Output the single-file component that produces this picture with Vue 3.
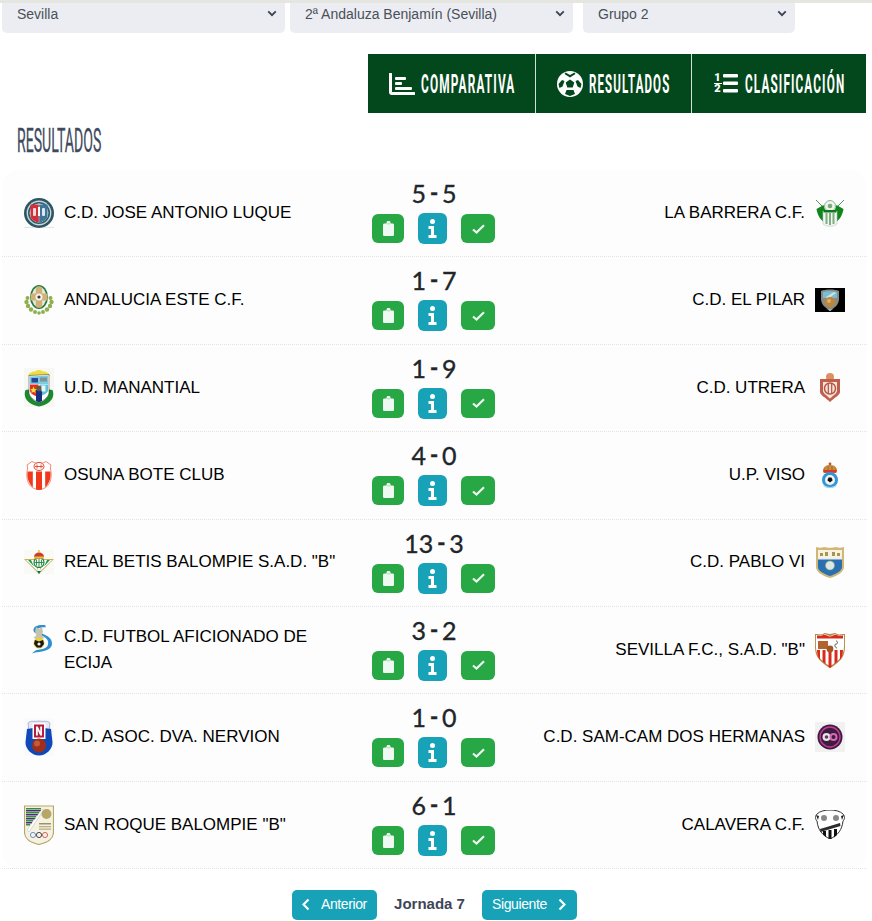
<script setup>
const selects = [
  { label: 'Sevilla', cls: 'w1' },
  { label: '2ª Andaluza Benjamín (Sevilla)', cls: 'w1' },
  { label: 'Grupo 2', cls: 'w2' },
]

const logos = {
  luque: { h: 30, svg: `<rect y="29.300" width="30" height=".7" fill="#d9dcdc"/><circle cx="15" cy="15" r="15" fill="#2c5664"/><circle cx="15" cy="15" r="12.400" fill="#c9d6da"/><circle cx="15" cy="15" r="11" fill="#2f5b69"/><circle cx="15" cy="15" r="9.400" fill="#eef3f4"/><path d="M6.500 6.500h8.300v18c-4-.5-8.300-3-8.300-7z" fill="#d22f38"/><path d="M15.200 6.500h8.300v11c0 4-4.300 6.500-8.300 7z" fill="#3f7598"/><rect x="9" y="10" width="3" height="8" rx="1" fill="#f5d9da"/><rect x="18" y="10" width="3" height="8" rx="1" fill="#dce8ef"/><rect x="14" y="9" width="2" height="9" fill="#fff"/>` },
  andalucia: { h: 30, svg: `<g fill="#8eb04e"><circle cx="3.500" cy="13" r="2"/><circle cx="26.500" cy="13" r="2"/><circle cx="2.500" cy="17" r="2.200"/><circle cx="27.500" cy="17" r="2.200"/><circle cx="4" cy="21" r="2.200"/><circle cx="26" cy="21" r="2.200"/><circle cx="7" cy="24.500" r="2.200"/><circle cx="23" cy="24.500" r="2.200"/><circle cx="11" cy="27" r="2"/><circle cx="19" cy="27" r="2"/><circle cx="15" cy="28" r="1.800"/></g><ellipse cx="15" cy="12" rx="9" ry="12" fill="#1f7a3d"/><ellipse cx="15" cy="12" rx="7.200" ry="10.500" fill="#e7eadb"/><rect x="11.800" y="1.500" width="6.400" height="21" rx="1.500" fill="#d2b07a"/><rect x="6.500" y="8.500" width="17" height="7" rx="1.500" fill="#d2b07a"/><circle cx="15" cy="12" r="3.500" fill="#f5f3ea"/><circle cx="15" cy="12" r="1.600" fill="#3b3b3b"/>` },
  manantial: { h: 39, svg: `<rect width="30" height="39" fill="#f7f7f4"/><path d="M4 8c1-4 4-3 5-5 1 2 3-1 6-1s5 3 6 1c1 2 4 1 5 5z" fill="#f0dc3c"/><g fill="#1b8a2c"><path d="M1.500 22c-3 8 3 15 13.500 16.500 10.500-1.500 16.500-8.500 13.500-16.500l-3.500-.5c.5 7-4 11.500-10 13-6-1.500-10.500-6-10-13z"/></g><path d="M5 7.500l20-1v18c0 4-5 8-10 10-5-2-10-6-10-10z" fill="#fff" stroke="#333" stroke-width=".5"/><path d="M6 8.500l18-1v8.500H6z" fill="#79cde0"/><path d="M6 16.500h8.500v12.500c-5-2-8.500-3-8.500-7z" fill="#e33022"/><path d="M15.500 16.500H24v6c0 2-3 4-8.500 6z" fill="#58c2dc"/><path d="M12 22h6v11l-3 1.500-3-1.500z" fill="#14307f"/><circle cx="15" cy="20.500" r="2.800" fill="#6c5a3c"/><path d="M9.500 18.500l1 2.500 2.400.2-1.800 1.500.6 2.400-2.200-1.300-2.200 1.300.6-2.400-1.800-1.500 2.400-.2z" fill="#f5e23a"/><rect x="17.500" y="17.500" width="4" height="6" fill="#e8f4f7"/><rect x="7.500" y="10" width="6.500" height="4.500" fill="#2a4595"/><rect x="16" y="9.500" width="7" height="4" fill="#8a8f96"/>` },
  osuna: { h: 30, svg: `<path d="M3 5l5-3.500 3 1.500h8l3-1.500L27 5c-.5 1.500-.8 2.500-.5 4 1.500 7 .5 13-3 17-2.500 2.500-6 3.500-8.500 3.500S9 28.500 6.500 26c-3.500-4-4.500-10-3-17C3.800 7.500 3.500 6.500 3 5z" fill="#fff" stroke="#ec6f55" stroke-width=".8"/><path d="M3.600 11.500H8.800v15.800C4.500 23 2.800 18 3.600 11.500z" fill="#f0381a"/><path d="M12 11.500h6v18c-2 .5-4 .5-6 0z" fill="#f0381a"/><path d="M21.200 11.500h5.200c.8 6.500-.9 11.500-5.200 15.800z" fill="#f0381a"/><ellipse cx="15" cy="6.500" rx="5" ry="4" fill="#fff" stroke="#e2492d" stroke-width="1"/><path d="M11 6.500h8M13 4.500v4M17 4.500v4" stroke="#e2492d" stroke-width=".9"/>` },
  betis: { h: 24, svg: `<rect width="30" height="24" fill="#f9f9f6"/><path d="M0 9h30L15 24z" fill="#c9b05a"/><path d="M2 10h26L15 22.500z" fill="#fff"/><path d="M4 10h3l3 6.500zM12 10h2v11zM16 10h2l-2 11zM23 10h3l-6 6.500z" fill="#1a9a45"/><circle cx="15" cy="12.500" r="5" fill="#f2f6ee" stroke="#0f7c36" stroke-width="1.100"/><path d="M15 8v9M10.500 12.500h9M12.500 9.500v6M17.500 9.500v6" stroke="#0f7c36" stroke-width=".8"/><path d="M10 7c0-6 10-6 10 0l-.5 1.500h-9z" fill="#d43a2a"/><path d="M10 6.500h10v2h-10z" fill="#e5c13c"/><circle cx="15" cy="1" r="1" fill="#e5c13c"/><path d="M13 21h4l-2 3z" fill="#0f7c36"/>` },
  ecija: { h: 30, svg: `<path d="M21.500 1.200C15 .5 9 2 9.500 6.500c.3 3 4 3.500 8 5 5 2 7.500 5 6.500 9-1 5-8 4.500-11 5.500-2 .6-4 2-5 3.500 3-1.500 6-1 10-2 5-1 10-3 10-8 0-5-4-7.500-9-9.500-3-1.300-5.500-2-5.500-4s5-3 8-2.500z" fill="#2d8fd2"/><path d="M12 3l3 2 3-2 1 5-1.500 3 3 3-3 1h-5l-3-1 3-3L11 8z" fill="#c6c2ad"/><circle cx="15" cy="19" r="5.500" fill="#ecd037"/><path d="M11 16l4 1.500 4-1.500 1 4-3 3.500h-4L10 20z" fill="#171717"/><circle cx="15" cy="20" r="1.600" fill="#f2f2f2"/>` },
  nervion: { h: 38, svg: `<rect width="30" height="38" fill="#fafafa"/><path d="M4 5c3-3 6-1 11-2 5 1 8-1 11 2l-1 8H5z" fill="#e6e9f3" stroke="#9aa7cf" stroke-width=".8"/><path d="M3 11c4-1.500 20-1.500 24 0l1.500 13c.5 7-6.500 13.500-13.500 13.500S1 31 1.500 24z" fill="#0f49b8"/><path d="M8.500 5h13v16h-13z" fill="#fff"/><path d="M10 6.500h10v13H10z" fill="#b31f3d"/><path d="M12 17.500v-9h1.800l2.400 5v-5H18v9h-1.800l-2.400-5v5z" fill="#fff"/><circle cx="15" cy="27.500" r="7" fill="#9e2f1a"/><circle cx="13" cy="25.500" r="3" fill="#c25a3c"/>` },
  roque: { h: 40, svg: `<path d="M.500 1h29v26c0 7-7 11-14.500 12.500C7.500 38 .500 34 .500 27z" fill="#f5f2e4" stroke="#b7a766" stroke-width="1.200"/><path d="M2 3h15v1.500H2zM2 7h13v1.500H2zM2 11h10v1.500H2zM2 15h7v1.500H2zM2 19h4v1.500H2z" fill="#3b8a3f"/><path d="M2 5h15v1.400H2zM2 9h13v1.400H2zM2 13h10v1.400H2zM2 17h6v1.400H2z" fill="#43307f"/><path d="M3 25L18 4l1.500 1L5 27z" fill="#fff" stroke="#a5a8a0" stroke-width=".4"/><circle cx="22.500" cy="9" r="5" fill="#b7a766"/><rect x="15" y="18" width="12" height="1.500" fill="#9d9464"/><rect x="15" y="21" width="12" height="1.300" fill="#b8b186"/><rect x="15" y="23.500" width="12" height="1.300" fill="#b8b186"/><g fill="none" stroke-width=".8"><circle cx="9" cy="30" r="2.600" stroke="#4a79c5"/><circle cx="15" cy="30" r="2.600" stroke="#222"/><circle cx="21" cy="30" r="2.600" stroke="#d04545"/></g>` },
  barrera: { h: 28, svg: `<path d="M1 1l8 8M29 1l-8 8" stroke="#5f8d63" stroke-width="1"/><path d="M1.500 10l7-4 2 6-1 4 1 8c-4-2-8-7-9-14zM28.500 10l-7-4-2 6 1 4-1 8c4-2 8-7 9-14z" fill="#0f851c"/><circle cx="15" cy="7" r="5.500" fill="#eef3ec" stroke="#8db78e" stroke-width="1"/><circle cx="15" cy="7" r="2.300" fill="#7aa97e"/><path d="M8 12h14v13c-3 3-11 3-14 0z" fill="#f3f6f1" stroke="#bccabc" stroke-width=".6"/><path d="M10.500 14h2v11h-2zM14 14h2v12h-2zM17.500 14h2v11h-2z" fill="#7fae83"/><path d="M8.500 11h13v2.500h-13z" fill="#0c7a18"/>` },
  pilar: { h: 24, svg: `<rect width="30" height="24" fill="#000"/><path d="M6 3c4-2 14-2 18 0v8c0 5-4 9-9 11.500C10 20 6 16 6 11z" fill="#8b8b86"/><path d="M8 4c3-1 11-1 14 0v6H8z" fill="#78bdd2"/><path d="M11 9l8-5 2 1-8 6z" fill="#cbe3ea"/><circle cx="15" cy="14" r="5" fill="#bf8636"/><circle cx="14" cy="13" r="2" fill="#dcae68"/><path d="M10 20c3 2 7 2 10 0l-5 3z" fill="#d4d0c4"/>` },
  utrera: { h: 29, svg: `<circle cx="15" cy="4" r="4" fill="#dc8f62"/><path d="M5 6h20v13c0 3-6 6-10 10-4-4-10-7-10-10z" fill="#c0604c"/><path d="M8 9h14v9c0 2-3.500 4.500-7 7.500-3.500-3-7-5.500-7-7.500z" fill="#f3e4dc"/><circle cx="15" cy="15.500" r="5.500" fill="none" stroke="#b8503f" stroke-width="1.400"/><path d="M13.300 10.500v10M16.700 10.500v10" stroke="#b8503f" stroke-width="1.200"/>` },
  viso: { h: 26, svg: `<path d="M8 9c0-3 2-6 7-6s7 3 7 6l-1 2H9z" fill="#b8792d"/><path d="M11 4v5M15 3v6M19 4v5" stroke="#d6a354" stroke-width="1"/><circle cx="15" cy="2" r="1.400" fill="#c4513a"/><path d="M8.500 8h13v2.500h-13z" fill="#d93a2c"/><circle cx="15" cy="18" r="8" fill="#3296d6"/><circle cx="15" cy="18" r="5" fill="#f5f5f5"/><path d="M13.500 15.500h3l1.200 2.700-2.700 2.300-2.700-2.300z" fill="#111"/><path d="M8 22c3 4 11 4 14 0l-1 3c-3 1-9 1-12 0z" fill="#bcdcf0"/>` },
  pablo: { h: 31, svg: `<path d="M1 0c3 1 6 1 8 0 3 1 9 1 12 0 2 1 5 1 8 0v20c0 5-7 9-14 11C8 29 1 25 1 20z" fill="#cfb778"/><path d="M3 3h24v8H3z" fill="#f7f1de"/><path d="M3 11h24v9c0 4-6 7-12 9-6-2-12-5-12-9z" fill="#2a6fb0"/><circle cx="15" cy="18.500" r="4.500" fill="#dfe8e0" stroke="#8aa890" stroke-width=".6"/><path d="M5 6h3v3H5zM10 5h3v4h-3zM17 5h3v4h-3zM22 6h3v3h-3z" fill="#a79457"/><path d="M3 11h24v1.500H3z" fill="#e8edf2"/>` },
  sevilla: { h: 36, svg: `<path d="M0 2c4 0 6 1 8 0 2-2 4 0 7 0s5-2 7 0c2 1 4 0 8 0 0 10 1 18-3 24-3 4-8 8-12 10-4-2-9-6-12-10C-1 20 0 12 0 2z" fill="#b88a48"/><path d="M1 3c4 .5 5 1 7 0 2-2 5 1 7 1s5-3 7-1c2 1 3 .5 7 0 0 9 1 16-3 22-3 4-7 7-11 9-4-2-8-5-11-9C0 19 1 12 1 3z" fill="#fff"/><path d="M2 3.500c3 .5 4.500.5 6-.5 2-1 5 1.500 7 1.500s5-2.500 7-1.500c1.500 1 3 1 6 .5v3H2z" fill="#d92a1c"/><path d="M2 18h3v10c-2-3-3-6-3-10zM7.500 18h3v14l-3-2.500zM13.500 18h3v17l-1.500 1-1.500-1zM19.500 18h3v11.500l-3 2.500zM25 18h3c0 4-1 7-3 10z" fill="#d92a1c"/><path d="M3 9h10v8H3z" fill="#b2632e"/><circle cx="15" cy="17" r="3.400" fill="#a55626"/><path d="M21 9c2 0 2 3 0 3s-1 4 1 4" fill="none" stroke="#555" stroke-width="1"/>` },
  samcam: { h: 30, svg: `<rect width="30" height="30" fill="#f1f1f1"/><circle cx="15" cy="15" r="12.500" fill="#3d1c3d"/><circle cx="15" cy="15" r="10" fill="none" stroke="#c63a9a" stroke-width="1.400"/><circle cx="11.500" cy="15" r="4" fill="#e8e4ea"/><circle cx="18.500" cy="15" r="4" fill="#d86ab5"/><circle cx="18.500" cy="15" r="2" fill="#3d1c3d"/><circle cx="11.500" cy="15" r="1.800" fill="#5a3f5a"/>` },
  calavera: { h: 29, svg: `<path d="M2 4c3-3 8-4 13-4s10 1 13 4c2 2 2 5 0 7-1 9-5 14-13 18C7 25 3 20 2 11 0 9 0 6 2 4z" fill="#fff" stroke="#333" stroke-width="1"/><circle cx="9" cy="8" r="3" fill="#888"/><circle cx="21" cy="8" r="3" fill="#888"/><path d="M1 5l3 1-1 4zM29 5l-3 1 1 4z" fill="#222"/><path d="M5 19l20-6 .500 3-20 6z" fill="#2d2d2d"/><path d="M8 21h3v6l-3-2.500zM13.500 20h3v9l-1.500 0-1.500-.5zM19 19h3v6l-3 2.500z" fill="#111"/>` },
}

const rows = [
  { home: 'C.D. JOSE ANTONIO LUQUE', hl: 'luque', h: '5', a: '5', away: 'LA BARRERA C.F.', al: 'barrera' },
  { home: 'ANDALUCIA ESTE C.F.', hl: 'andalucia', h: '1', a: '7', away: 'C.D. EL PILAR', al: 'pilar' },
  { home: 'U.D. MANANTIAL', hl: 'manantial', h: '1', a: '9', away: 'C.D. UTRERA', al: 'utrera' },
  { home: 'OSUNA BOTE CLUB', hl: 'osuna', h: '4', a: '0', away: 'U.P. VISO', al: 'viso' },
  { home: 'REAL BETIS BALOMPIE S.A.D. "B"', hl: 'betis', h: '13', a: '3', away: 'C.D. PABLO VI', al: 'pablo' },
  { home: 'C.D. FUTBOL AFICIONADO DE ECIJA', hl: 'ecija', h: '3', a: '2', away: 'SEVILLA F.C., S.A.D. "B"', al: 'sevilla', wrap: true },
  { home: 'C.D. ASOC. DVA. NERVION', hl: 'nervion', h: '1', a: '0', away: 'C.D. SAM-CAM DOS HERMANAS', al: 'samcam' },
  { home: 'SAN ROQUE BALOMPIE "B"', hl: 'roque', h: '6', a: '1', away: 'CALAVERA C.F.', al: 'calavera' },
]
</script>

<template>
  <div class="page">
    <div class="filters">
      <div v-for="s in selects" :key="s.label" class="select" :class="s.cls">
        <span>{{ s.label }}</span>
        <svg class="chev" viewBox="0 0 12 8" width="10" height="7"><path d="M1.500 1.500L6 6l4.500-4.500" fill="none" stroke="#3b4250" stroke-width="2.200"/></svg>
      </div>
    </div>

    <nav class="tabs">
      <a class="tab t1">
        <svg width="26" height="22" viewBox="0 0 26 22"><path d="M1.500 1v18c0 1 .5 1.500 1.500 1.500h22" fill="none" stroke="#fff" stroke-width="3" stroke-linecap="round"/><rect x="6" y="4" width="11" height="3" rx="1" fill="#fff"/><rect x="6" y="9" width="7" height="3" rx="1" fill="#fff"/><rect x="6" y="14" width="17" height="3" rx="1" fill="#fff"/></svg>
        <span class="cond c1"><span>COMPARATIVA</span></span>
      </a>
      <a class="tab t2">
        <svg width="26" height="26" viewBox="0 0 26 26"><circle cx="13" cy="13" r="13" fill="#fff"/><path d="M13 8.500l4.300 3.100-1.600 5h-5.400l-1.600-5z" fill="#03481c"/><path d="M8.500 1.500L13 4l4.500-2.500 1 1.500L13 6.500 7.500 3zM1.500 13l3.500-4 2.500 1-2 5.500-3 1.500zM24.500 13l-3.500-4-2.500 1 2 5.500 3 1.500zM8 23l1.500-4h7L18 23l-5 2z" fill="#03481c"/></svg>
        <span class="cond c2"><span>RESULTADOS</span></span>
      </a>
      <a class="tab t3">
        <span class="frac"><b>1</b><i></i><b>2</b></span>
        <svg width="15" height="21" viewBox="0 0 15 21"><rect y="1" width="15" height="3.500" rx="1" fill="#fff"/><rect y="8.500" width="15" height="3.500" rx="1" fill="#fff"/><rect y="16" width="15" height="3.500" rx="1" fill="#fff"/></svg>
        <span class="cond c3"><span>CLASIFICACIÓN</span></span>
      </a>
    </nav>

    <h2 class="title"><span>RESULTADOS</span></h2>

    <section class="card">
      <div v-for="r in rows" :key="r.home" class="row">
        <div class="team home" :class="{ wrap: r.wrap }">
          <svg class="logo" width="30" :height="logos[r.hl].h" :viewBox="`0 0 30 ${logos[r.hl].h}`" v-html="logos[r.hl].svg"></svg>
          <span class="name">{{ r.home }}</span>
        </div>
        <div class="mid">
          <div class="score"><span>{{ r.h }}</span><b class="dash">-</b><span>{{ r.a }}</span></div>
          <div class="btns">
            <span class="btn b1"><svg width="11" height="15" viewBox="0 0 11 15"><path d="M3.500 2.500V1.500C3.500.7 4 0 5.500 0S7.500.7 7.500 1.500v1h2c1 0 1.500.5 1.500 1.500v9.500c0 1-.5 1.500-1.500 1.500h-8C.5 15 0 14.500 0 13.500V4c0-1 .5-1.500 1.500-1.500z" fill="#eef9f1"/><rect x="4" y="2" width="3" height="1.500" fill="#bfe6ca"/></svg></span>
            <span class="btn b2"><svg width="9" height="19" viewBox="0 0 9 19"><circle cx="4.500" cy="2.500" r="2.500" fill="#fff"/><path d="M.500 7H6v9h2.500v3H.500v-3H3v-6H.500z" fill="#fff"/></svg></span>
            <span class="btn b3"><svg width="13" height="10" viewBox="0 0 13 10"><path d="M1 5.500l3.500 3L12 1.200" fill="none" stroke="#eef9f1" stroke-width="2.200"/></svg></span>
          </div>
        </div>
        <div class="team away">
          <span class="name">{{ r.away }}</span>
          <svg class="logo" width="30" :height="logos[r.al].h" :viewBox="`0 0 30 ${logos[r.al].h}`" v-html="logos[r.al].svg"></svg>
        </div>
      </div>
    </section>

    <div class="pager">
      <a class="pbtn prev"><svg width="8" height="13" viewBox="0 0 8 13"><path d="M6.500 1.500L1.500 6.500l5 5" fill="none" stroke="#fff" stroke-width="2.200"/></svg><span>Anterior</span></a>
      <strong class="jornada">Jornada 7</strong>
      <a class="pbtn next"><span>Siguiente</span><svg width="8" height="13" viewBox="0 0 8 13"><path d="M1.500 1.500l5 5-5 5" fill="none" stroke="#fff" stroke-width="2.200"/></svg></a>
    </div>
  </div>
</template>

<style>
html, body { margin: 0; background: #fff; }
</style>

<style scoped>
.page {
  width: 872px;
  height: 921px;
  overflow: hidden;
  box-sizing: border-box;
  border-top: 3px solid #e6e6e1;
  font-family: "Liberation Sans", Arial, sans-serif;
}
.filters { display: flex; padding-left: 2px; gap: 5px; }
.select {
  box-sizing: border-box;
  height: 30px;
  padding: 0 8px 9px 15px;
  background: #ecedf3;
  border-radius: 0 0 5px 5px;
  color: #495057;
  font-size: 14px;
  display: flex;
  align-items: center;
  justify-content: space-between;
}
.w1 { width: 283px; }
.w2 { width: 212px; margin-left: 5px; }
.tabs {
  display: flex;
  width: 498px;
  height: 59px;
  margin: 21px 0 0 368px;
  background: #03481c;
}
.tab {
  box-sizing: border-box;
  display: flex;
  align-items: center;
  color: #fff;
  padding-left: 21px;
  border-right: 1px solid #cfe0d4;
}
.t1 { width: 168px; gap: 6px; }
.t2 { width: 156px; gap: 6px; }
.t3 { width: 174px; gap: 1px; border-right: 0; }
.cond { display: block; height: 22px; }
.cond span {
  display: inline-block;
  font: 700 26px/22px "Roboto", "Liberation Sans", sans-serif;
  transform-origin: left center;
  white-space: nowrap;
  letter-spacing: 2.500px;
}
.c1 { width: 94px; }
.c1 span { transform: scaleX(.456); }
.c2 { width: 82px; }
.c2 span { transform: scaleX(.443); }
.c3 { width: 101px; margin-left: 6px; }
.c3 span { transform: scaleX(.452); }
.frac {
  width: 9px;
  display: flex;
  flex-direction: column;
  align-items: center;
  font: 700 11px/9px "Roboto", sans-serif;
}
.frac b { display: block; height: 10px; }
.frac i { display: block; width: 8px; height: 1.500px; background: #fff; }
.title {
  margin: 15px 0 0 17px;
  height: 42px;
  font: 400 33px/26px "Roboto", "Liberation Sans", sans-serif;
  color: #3e4a5e;
  white-space: nowrap;
}
.title span {
  display: inline-block;
  transform: scaleX(.428);
  transform-origin: left center;
  -webkit-text-stroke: .3px #3e4a5e;
}
.card {
  margin: 0 5px 0 2px;
  background: #fdfdfd;
  border-radius: 16px;
}
.row {
  box-sizing: border-box;
  height: 87.400px;
  display: grid;
  grid-template-columns: 362px 140px 1fr;
  border-bottom: 1px dotted #e4e4e4;
}
.team {
  display: flex;
  align-items: center;
  height: 85.800px;
  font-size: 17px;
  line-height: 26px;
  color: #000;
}
.home { padding: 0 15px 0 22px; gap: 10px; }
.home.wrap .logo { align-self: flex-start; margin-top: 17px; }
.away { justify-content: flex-end; padding-right: 22px; gap: 10px; text-align: right; }
.logo { flex: none; display: block; }
.mid {
  display: flex;
  flex-direction: column;
  align-items: center;
  padding-top: 8px;
}
.score {
  display: flex;
  align-items: center;
  gap: 4px;
  height: 30px;
  margin-bottom: 5px;
  font: 400 25px/30px "Lato", sans-serif;
  color: #212529;
  -webkit-text-stroke: .35px #212529;
  white-space: nowrap;
}
.dash { font-weight: 900; font-size: 22px; }
.btns { display: flex; align-items: center; gap: 14px; height: 31px; margin-left: -1px; }
.btn {
  display: flex;
  align-items: center;
  justify-content: center;
  border-radius: 6px;
}
.b1 { width: 32px; height: 29px; background: #28a745; }
.b2 { width: 29px; height: 31px; background: #17a2b8; }
.b3 { width: 34px; height: 29px; background: #28a745; }
.pager {
  display: flex;
  align-items: center;
  margin: 21px 0 0 292px;
  height: 30px;
}
.pbtn {
  box-sizing: border-box;
  height: 30px;
  padding-bottom: 2px;
  display: flex;
  align-items: center;
  background: #17a2b8;
  color: #fff;
  border-radius: 5px;
  font-size: 14px;
  letter-spacing: -.4px;
}
.prev { width: 85px; padding-left: 10px; gap: 11px; }
.next { width: 95px; padding-left: 10px; gap: 11px; }
.jornada { width: 105px; margin-top: -4px; text-align: center; font-size: 15px; color: #3e4556; }
</style>
